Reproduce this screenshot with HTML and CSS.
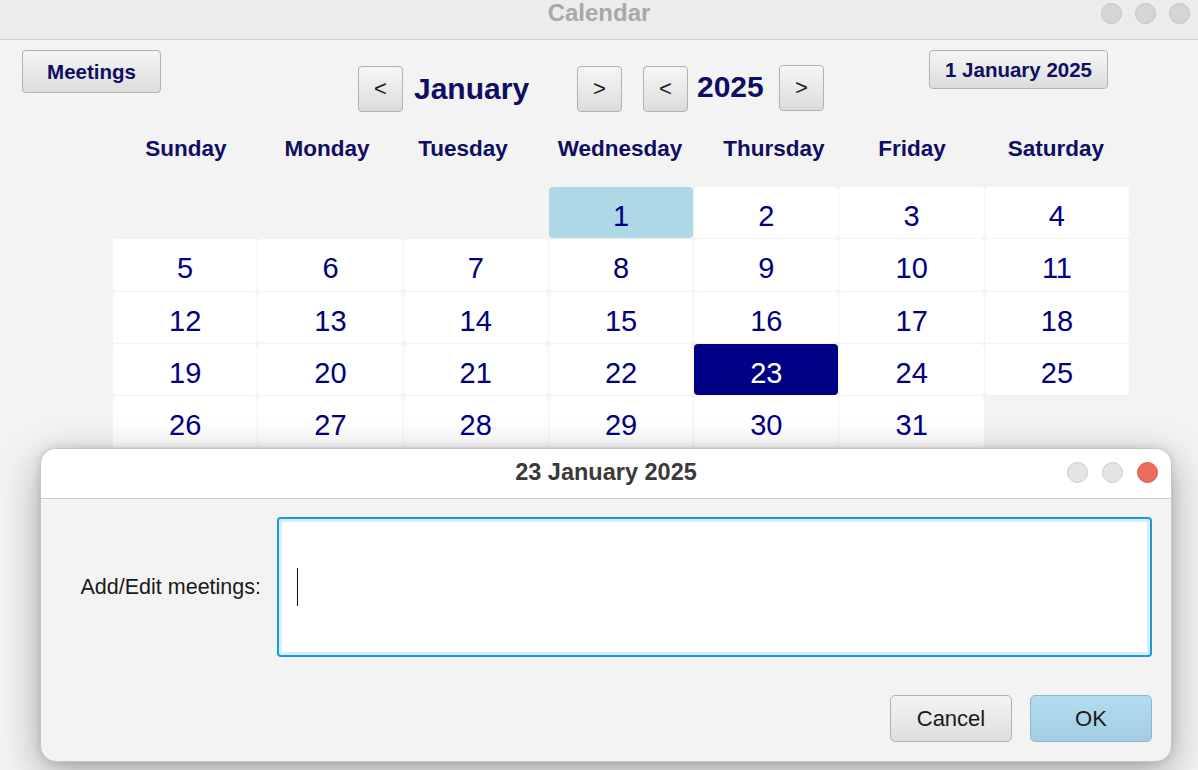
FILE: index.html
```html
<!DOCTYPE html>
<html>
<head>
<meta charset="utf-8">
<link rel="stylesheet" href="styles.css">
</head>
<body>
<div class="window">
  <div class="titlebar">
    <div class="title">Calendar</div>
    <div class="lights">
      <span class="light"></span><span class="light"></span><span class="light"></span>
    </div>
  </div>
  <div class="content">
    <div class="toolbar">
      <button class="btn btn-meetings">Meetings</button>
      <div class="nav">
        <button class="btn btn-nav">&lt;</button>
        <span class="month">January</span>
        <button class="btn btn-nav">&gt;</button>
        <button class="btn btn-nav btn-prev-year">&lt;</button>
        <span class="year">2025</span>
        <button class="btn btn-nav btn-next-year">&gt;</button>
      </div>
      <button class="btn btn-today">1 January 2025</button>
    </div>
    <div class="headers">
      <div>Sunday</div><div>Monday</div><div>Tuesday</div><div>Wednesday</div><div>Thursday</div><div>Friday</div><div>Saturday</div>
    </div>
    <div class="grid">
      <div class="cell empty"></div><div class="cell empty"></div><div class="cell empty"></div>
      <div class="cell today">1</div><div class="cell">2</div><div class="cell">3</div><div class="cell">4</div>
      <div class="cell">5</div><div class="cell">6</div><div class="cell">7</div><div class="cell">8</div><div class="cell">9</div><div class="cell">10</div><div class="cell">11</div>
      <div class="cell">12</div><div class="cell">13</div><div class="cell">14</div><div class="cell">15</div><div class="cell">16</div><div class="cell">17</div><div class="cell">18</div>
      <div class="cell">19</div><div class="cell">20</div><div class="cell">21</div><div class="cell">22</div><div class="cell selected">23</div><div class="cell">24</div><div class="cell">25</div>
      <div class="cell">26</div><div class="cell">27</div><div class="cell">28</div><div class="cell">29</div><div class="cell">30</div><div class="cell">31</div><div class="cell empty"></div>
    </div>
  </div>

  <div class="dialog">
    <div class="dlg-titlebar">
      <div class="dlg-title">23 January 2025</div>
      <div class="dlg-lights">
        <span class="dlight"></span><span class="dlight"></span><span class="dlight close"></span>
      </div>
    </div>
    <div class="dlg-body">
      <div class="form-row">
        <label class="form-label">Add/Edit meetings:</label>
        <div class="textarea"><span class="caret"></span></div>
      </div>
      <div class="actions">
        <button class="dbtn">Cancel</button>
        <button class="dbtn dbtn-ok">OK</button>
      </div>
    </div>
  </div>
</div>
</body>
</html>
```
FILE: styles.css
```css
html, body {
  margin: 0;
  padding: 0;
}
body {
  width: 1198px;
  height: 770px;
  overflow: hidden;
  background: #f3f3f3;
  font-family: "Liberation Sans", Arial, sans-serif;
}
.window {
  position: relative;
  width: 1198px;
  height: 770px;
  background: #f3f3f3;
}
.titlebar {
  height: 39px;
  background: #ececec;
  border-bottom: 1px solid #d2d2d2;
  display: flex;
  align-items: center;
  justify-content: center;
  position: relative;
}
.title {
  font-weight: bold;
  font-size: 24px;
  color: #a8a8a8;
  margin-top: -14px;
}
.lights {
  position: absolute;
  right: 8px;
  top: 3px;
  display: flex;
  gap: 13px;
}
.light {
  width: 21px;
  height: 21px;
  border-radius: 50%;
  background: #d5d5d5;
  border: 1px solid #c4c4c4;
  box-sizing: border-box;
}
.content {
  display: flex;
  flex-direction: column;
}
.toolbar {
  display: flex;
  align-items: flex-start;
  padding-top: 10px;
  height: 63px;
}
.btn {
  font-family: "Liberation Sans", Arial, sans-serif;
  background: linear-gradient(#f6f6f6, #dcdcdc);
  border: 1px solid #b2b2b2;
  border-radius: 4px;
  padding: 0;
  box-sizing: border-box;
  cursor: default;
}
.btn-meetings {
  margin-left: 22px;
  width: 139px;
  height: 43px;
  font-weight: bold;
  font-size: 20.5px;
  color: #0e0e62;
}
.btn-today {
  margin-left: 105px;
  width: 179px;
  height: 39px;
  font-weight: bold;
  font-size: 20.5px;
  color: #0e0e62;
}
.nav {
  display: flex;
  align-items: center;
  margin-left: 197px;
  margin-top: 16px;
  height: 46px;
}
.btn-nav {
  width: 45px;
  height: 46px;
  font-size: 22px;
  color: #1a1a1a;
}
.month {
  width: 163px;
  margin-left: 11px;
  font-weight: bold;
  font-size: 30px;
  color: #0e0e62;
}
.btn-prev-year {
  margin-left: 21px;
}
.year {
  margin-left: 9px;
  width: 74px;
  font-weight: bold;
  font-size: 30px;
  color: #0e0e62;
  margin-top: -4px;
}
.btn-next-year {
  margin-left: 8px;
  margin-top: -2px;
}
.headers {
  display: grid;
  grid-template-columns: 146px 136px 136px 178px 130px 146px 142px;
  margin-left: 113px;
  height: 74px;
  align-items: start;
}
.headers div {
  text-align: center;
  font-weight: bold;
  font-size: 22.5px;
  color: #0e0e62;
  padding-top: 23px;
  white-space: nowrap;
}
.grid {
  display: grid;
  grid-template-columns: repeat(7, 144.3px);
  grid-auto-rows: 51.3px;
  gap: 1px;
  margin-left: 113px;
}
.cell {
  background: #ffffff;
  border-radius: 4px;
  display: flex;
  align-items: center;
  justify-content: center;
  font-size: 29px;
  color: #000080;
  padding-top: 8px;
  box-sizing: border-box;
}
.cell.empty {
  background: transparent;
}
.cell.today {
  background: #add8e6;
}
.cell.selected {
  background: #000086;
  color: #ffffff;
}
.dialog {
  position: absolute;
  left: 40px;
  top: 448px;
  width: 1132px;
  height: 314px;
  box-sizing: border-box;
  background: #f3f3f3;
  border: 1px solid #c6c6c6;
  border-radius: 16px;
  box-shadow: 0 12px 40px rgba(0, 0, 0, 0.32), 0 0 8px rgba(0, 0, 0, 0.12);
  overflow: hidden;
  display: flex;
  flex-direction: column;
}
.dlg-titlebar {
  height: 49px;
  background: #ffffff;
  border-bottom: 1px solid #cfcfcf;
  display: flex;
  align-items: center;
  justify-content: center;
  position: relative;
  flex-shrink: 0;
}
.dlg-title {
  font-weight: bold;
  font-size: 23.5px;
  color: #3a3a3a;
  margin-top: -2px;
}
.dlg-lights {
  position: absolute;
  right: 13px;
  top: 13px;
  display: flex;
  gap: 14px;
}
.dlight {
  width: 21px;
  height: 21px;
  border-radius: 50%;
  background: #e4e4e4;
  border: 1px solid #cbcbcb;
  box-sizing: border-box;
}
.dlight.close {
  background: #ec6a5e;
  border-color: #d85a4f;
}
.dlg-body {
  display: flex;
  flex-direction: column;
  padding: 18px 19px 0 0;
}
.form-row {
  display: flex;
  align-items: center;
}
.form-label {
  width: 220px;
  text-align: right;
  font-size: 21.5px;
  color: #1a1a1a;
  margin-right: 16px;
}
.textarea {
  width: 875px;
  height: 140px;
  box-sizing: border-box;
  background: #ffffff;
  border: 2px solid #1d9bd8;
  border-radius: 4px;
  box-shadow: inset 0 0 0 3px #d8eef9;
  display: flex;
  align-items: center;
  padding-left: 18px;
}
.caret {
  width: 1px;
  height: 38px;
  background: #111111;
}
.actions {
  display: flex;
  justify-content: flex-end;
  gap: 18px;
  margin-top: 38px;
}
.dbtn {
  width: 122px;
  height: 47px;
  box-sizing: border-box;
  border: 1px solid #b0b0b0;
  border-radius: 5px;
  background: linear-gradient(#f3f3f3, #dedede);
  font-family: "Liberation Sans", Arial, sans-serif;
  font-size: 22px;
  color: #1a1a1a;
  padding: 0;
}
.dbtn-ok {
  background: linear-gradient(#b3dcef, #a2cde3);
  border-color: #8fb7cc;
}
```
